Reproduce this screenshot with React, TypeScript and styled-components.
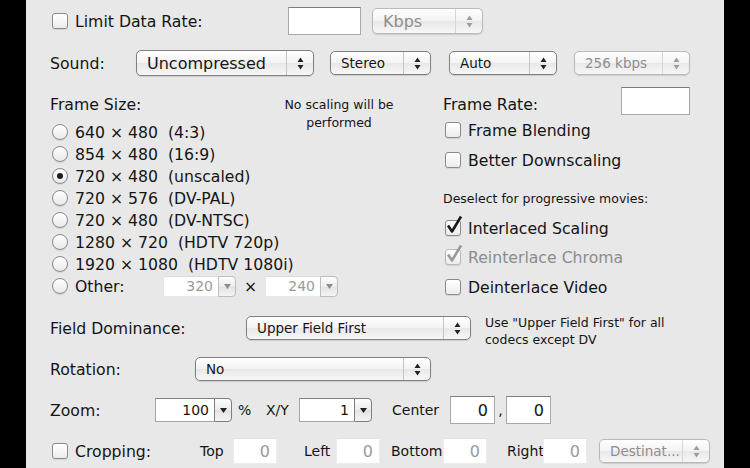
import React from 'react';
import styled, { createGlobalStyle } from 'styled-components';

const GlobalStyle = createGlobalStyle`
  html, body {
    margin: 0;
    padding: 0;
    background: #000;
  }
  body {
    font-family: "DejaVu Sans", "Liberation Sans", sans-serif;
  }
`;

const Screen = styled.div`
  width: 750px;
  height: 468px;
  overflow: hidden;
  background: #000;
  display: flex;
  justify-content: center;
`;

const Panel = styled.div`
  width: 698px;
  height: 468px;
  box-sizing: border-box;
  padding: 7px 0 0 24px;
  background: #e8e8e8;
  color: #141414;
  font-size: 15.7px;
`;

const Row = styled.div<{ $h: number; $mt?: number }>`
  display: flex;
  align-items: center;
  height: ${(p) => p.$h}px;
  margin-top: ${(p) => p.$mt ?? 0}px;
`;

const Label = styled.span<{ $w?: number; $ml?: number; $fs?: number; $off?: boolean; $center?: boolean }>`
  flex-shrink: 0;
  white-space: pre;
  width: ${(p) => (p.$w ? `${p.$w}px` : 'auto')};
  margin-left: ${(p) => p.$ml ?? 0}px;
  font-size: ${(p) => (p.$fs ? `${p.$fs}px` : 'inherit')};
  color: ${(p) => (p.$off ? '#8c8c8c' : 'inherit')};
  text-align: ${(p) => (p.$center ? 'center' : 'left')};
`;

const SmallNote = styled.div`
  font-size: 12.5px;
  line-height: 16.5px;
  white-space: nowrap;
`;

/* ---------- check box ---------- */

const CheckLine = styled.label<{ $w?: number }>`
  display: flex;
  align-items: center;
  gap: 7px;
  flex-shrink: 0;
  width: ${(p) => (p.$w ? `${p.$w}px` : 'auto')};
  padding-left: 2px;
  box-sizing: border-box;
`;

const Box = styled.span<{ $off?: boolean }>`
  width: 16px;
  height: 16px;
  box-sizing: border-box;
  flex-shrink: 0;
  border: 1px solid ${(p) => (p.$off ? '#b8b8b8' : '#8a8a8a')};
  border-radius: 3px;
  background: linear-gradient(#ffffff, #ececec);
  box-shadow: 0 1px 1px rgba(0, 0, 0, 0.1);
  display: flex;
  align-items: flex-end;
  justify-content: center;
  overflow: visible;

  svg {
    margin-bottom: 1px;
    margin-left: 2px;
    flex-shrink: 0;
  }
`;

function CheckBox({ checked, off, children, w }: { checked?: boolean; off?: boolean; children: React.ReactNode; w?: number }) {
  return (
    <CheckLine $w={w}>
      <Box $off={off}>
        {checked && (
          <svg width="17" height="19" viewBox="0 0 17 19">
            <path
              d="M2 10.5 L6 16.5 L15 1.5"
              fill="none"
              stroke={off ? '#9a9a9a' : '#1a1a1a'}
              strokeWidth="2.6"
              strokeLinejoin="round"
            />
          </svg>
        )}
      </Box>
      <Label $off={off}>{children}</Label>
    </CheckLine>
  );
}

/* ---------- radio ---------- */

const RadioLine = styled.label<{ $narrow?: boolean }>`
  display: flex;
  align-items: center;
  gap: 7px;
  padding-left: 2px;
  grid-column: ${(p) => (p.$narrow ? '1' : '1 / -1')};
`;

const Circle = styled.span<{ $on?: boolean }>`
  width: 16px;
  height: 16px;
  box-sizing: border-box;
  flex-shrink: 0;
  border-radius: 50%;
  border: 1px solid #8a8a8a;
  background: linear-gradient(#ffffff, #e9e9e9);
  box-shadow: 0 1px 1px rgba(0, 0, 0, 0.1);
  display: flex;
  align-items: center;
  justify-content: center;

  &::after {
    content: '';
    display: ${(p) => (p.$on ? 'block' : 'none')};
    width: 6px;
    height: 6px;
    border-radius: 50%;
    background: #1e1e1e;
  }
`;

/* ---------- popup button ---------- */

const PopupBox = styled.div<{ $w: number; $h: number; $fs: number; $off?: boolean; $ml?: number }>`
  width: ${(p) => p.$w}px;
  height: ${(p) => p.$h}px;
  margin-left: ${(p) => p.$ml ?? 0}px;
  box-sizing: border-box;
  flex-shrink: 0;
  display: flex;
  border: 1px solid ${(p) => (p.$off ? '#b9b9b9' : '#808080')};
  border-radius: 5px;
  background: linear-gradient(#fefefe, #f3f3f3 50%, #e8e8e8 52%, #f7f7f7);
  box-shadow: 0 1px 1px rgba(0, 0, 0, 0.12);
  color: ${(p) => (p.$off ? '#8e8e8e' : '#161616')};
  font-size: ${(p) => p.$fs}px;
`;

const PopupText = styled.span`
  flex: 1;
  display: flex;
  align-items: center;
  padding-left: 10px;
  white-space: nowrap;
  overflow: hidden;
`;

const PopupArrows = styled.span<{ $off?: boolean }>`
  width: 26px;
  flex-shrink: 0;
  border-left: 1px solid ${(p) => (p.$off ? '#d6d6d6' : '#c4c4c4')};
  display: flex;
  align-items: center;
  justify-content: center;
`;

function Popup({ value, w, small, off, ml }: { value: string; w: number; small?: boolean; off?: boolean; ml?: number }) {
  const c = off ? '#9c9c9c' : '#222';
  return (
    <PopupBox $w={w} $h={small ? 24 : 26} $fs={small ? 13.5 : 16} $off={off} $ml={ml}>
      <PopupText>{value}</PopupText>
      <PopupArrows $off={off}>
        <svg width="7" height="13" viewBox="0 0 7 13">
          <path d="M3.5 0.5 L6.5 5 L0.5 5 Z" fill={c} />
          <path d="M0.5 8 L6.5 8 L3.5 12.5 Z" fill={c} />
        </svg>
      </PopupArrows>
    </PopupBox>
  );
}

/* ---------- text field / combo ---------- */

const Field = styled.div<{ $w: number; $h: number; $off?: boolean; $ml?: number }>`
  width: ${(p) => p.$w}px;
  height: ${(p) => p.$h}px;
  margin-left: ${(p) => p.$ml ?? 0}px;
  box-sizing: border-box;
  flex-shrink: 0;
  background: #fff;
  border: 1px solid ${(p) => (p.$off ? '#ececec' : '#a8a8a8')};
  border-top-color: ${(p) => (p.$off ? '#e2e2e2' : '#7e7e7e')};
  display: flex;
  align-items: center;
  justify-content: flex-end;
  padding-right: 6px;
  font-size: 16px;
  color: ${(p) => (p.$off ? '#9a9a9a' : '#141414')};
`;

const ComboBox = styled.div<{ $w: number; $h: number; $off?: boolean }>`
  width: ${(p) => p.$w}px;
  height: ${(p) => p.$h}px;
  box-sizing: border-box;
  flex-shrink: 0;
  display: flex;
  font-size: 14px;
  color: ${(p) => (p.$off ? '#9a9a9a' : '#141414')};
`;

const ComboText = styled.span<{ $off?: boolean }>`
  flex: 1;
  background: #fff;
  border: 1px solid ${(p) => (p.$off ? '#e6e6e6' : '#a6a6a6')};
  border-top-color: ${(p) => (p.$off ? '#dcdcdc' : '#7e7e7e')};
  border-right: none;
  display: flex;
  align-items: center;
  justify-content: flex-end;
  padding-right: 5px;
`;

const ComboButton = styled.span<{ $off?: boolean }>`
  width: 18px;
  box-sizing: border-box;
  border: 1px solid ${(p) => (p.$off ? '#bdbdbd' : '#7e7e7e')};
  border-radius: 0 4px 4px 0;
  background: linear-gradient(#fdfdfd, #ececec 50%, #e2e2e2 52%, #f4f4f4);
  display: flex;
  align-items: center;
  justify-content: center;
`;

function Combo({ value, w, h, off }: { value: string; w: number; h: number; off?: boolean }) {
  return (
    <ComboBox $w={w} $h={h} $off={off}>
      <ComboText $off={off}>{value}</ComboText>
      <ComboButton $off={off}>
        <svg width="7" height="5" viewBox="0 0 7 5">
          <path d="M0 0 L7 0 L3.5 5 Z" fill={off ? '#8c8c8c' : '#222'} />
        </svg>
      </ComboButton>
    </ComboBox>
  );
}

/* ---------- middle section ---------- */

const Middle = styled.div`
  display: grid;
  grid-template-columns: 393px 1fr;
  margin-top: 10px;
  height: 212px;
`;

const SizeGrid = styled.div`
  display: grid;
  grid-template-columns: 225px 128px;
  grid-template-rows: 34px repeat(8, 22px);
  align-items: center;
`;

const SizeHeading = styled.span`
  grid-column: 1;
  grid-row: 1;
`;

const ScaleNote = styled(SmallNote)`
  grid-column: 2;
  grid-row: 1 / span 2;
  align-self: start;
  padding-top: 9px;
  line-height: 18px;
  text-align: center;
`;

const RightCol = styled.div`
  display: flex;
  flex-direction: column;
`;

const RightRow = styled.div<{ $mt: number; $h: number }>`
  display: flex;
  align-items: center;
  height: ${(p) => p.$h}px;
  margin-top: ${(p) => p.$mt}px;
`;

const RateLabel = styled.span`
  width: 178px;
  margin-top: 6px;
  flex-shrink: 0;
`;

const FieldHelp = styled(SmallNote)`
  align-self: flex-start;
  margin-left: 14px;
`;

const sizes: string[] = [
  '640 × 480  (4:3)',
  '854 × 480  (16:9)',
  '720 × 480  (unscaled)',
  '720 × 576  (DV-PAL)',
  '720 × 480  (DV-NTSC)',
  '1280 × 720  (HDTV 720p)',
  '1920 × 1080  (HDTV 1080i)',
];

export default function App() {
  return (
    <Screen>
      <GlobalStyle />
      <Panel>
        <Row $h={28}>
          <CheckBox w={238}>Limit Data Rate:</CheckBox>
          <Field $w={73} $h={28} />
          <Popup value="Kbps" w={111} off ml={11} />
        </Row>

        <Row $h={28} $mt={14}>
          <Label $w={86}>Sound:</Label>
          <Popup value="Uncompressed" w={178} />
          <Popup value="Stereo" w={101} small ml={16} />
          <Popup value="Auto" w={108} small ml={18} />
          <Popup value="256 kbps" w={116} small off ml={17} />
        </Row>

        <Middle>
          <SizeGrid>
            <SizeHeading>Frame Size:</SizeHeading>
            <ScaleNote>
              No scaling will be
              <br />
              performed
            </ScaleNote>
            {sizes.map((s, i) => (
              <RadioLine key={s} $narrow={i === 0}>
                <Circle $on={i === 2} />
                <Label>{s}</Label>
              </RadioLine>
            ))}
            <RadioLine>
              <Circle />
              <Label $w={81}>Other:</Label>
              <Combo value="320" w={73} h={21} off />
              <Label $w={15} $center>
                ×
              </Label>
              <Combo value="240" w={73} h={21} off />
            </RadioLine>
          </SizeGrid>

          <RightCol>
            <RightRow $mt={0} $h={28}>
              <RateLabel>Frame Rate:</RateLabel>
              <Field $w={69} $h={28} />
            </RightRow>
            <RightRow $mt={3} $h={24}>
              <CheckBox>Frame Blending</CheckBox>
            </RightRow>
            <RightRow $mt={6} $h={24}>
              <CheckBox>Better Downscaling</CheckBox>
            </RightRow>
            <RightRow $mt={18} $h={18}>
              <SmallNote>Deselect for progressive movies:</SmallNote>
            </RightRow>
            <RightRow $mt={8} $h={24}>
              <CheckBox checked>Interlaced Scaling</CheckBox>
            </RightRow>
            <RightRow $mt={5} $h={24}>
              <CheckBox checked off>
                Reinterlace Chroma
              </CheckBox>
            </RightRow>
            <RightRow $mt={6} $h={24}>
              <CheckBox>Deinterlace Video</CheckBox>
            </RightRow>
          </RightCol>
        </Middle>

        <Row $h={26} $mt={16}>
          <Label $w={196}>Field Dominance:</Label>
          <Popup value="Upper Field First" w={225} small />
          <FieldHelp>
            Use "Upper Field First" for all
            <br />
            codecs except DV
          </FieldHelp>
        </Row>

        <Row $h={26} $mt={15}>
          <Label $w={145}>Rotation:</Label>
          <Popup value="No" w={236} small />
        </Row>

        <Row $h={26} $mt={15}>
          <Label $w={105}>Zoom:</Label>
          <Combo value="100" w={77} h={24} />
          <Label $w={28} $ml={6} $fs={14}>
            %
          </Label>
          <Label $w={33} $fs={14}>
            X/Y
          </Label>
          <Combo value="1" w={73} h={24} />
          <Label $w={58} $ml={20} $fs={14}>
            Center
          </Label>
          <Field $w={45} $h={28}>
            0
          </Field>
          <Label $w={11} $fs={14} $center>
            ,
          </Label>
          <Field $w={45} $h={28}>
            0
          </Field>
        </Row>

        <Row $h={26} $mt={15}>
          <CheckBox w={150}>Cropping:</CheckBox>
          <Label $w={33} $fs={14}>
            Top
          </Label>
          <Field $w={44} $h={26} $off>
            0
          </Field>
          <Label $w={32} $ml={27} $fs={14}>
            Left
          </Label>
          <Field $w={44} $h={26} $off>
            0
          </Field>
          <Label $w={52} $ml={11} $fs={14}>
            Bottom
          </Label>
          <Field $w={44} $h={26} $off>
            0
          </Field>
          <Label $w={36} $ml={20} $fs={14}>
            Right
          </Label>
          <Field $w={44} $h={26} $off>
            0
          </Field>
          <Popup value="Destinat..." w={111} small off ml={12} />
        </Row>
      </Panel>
    </Screen>
  );
}
